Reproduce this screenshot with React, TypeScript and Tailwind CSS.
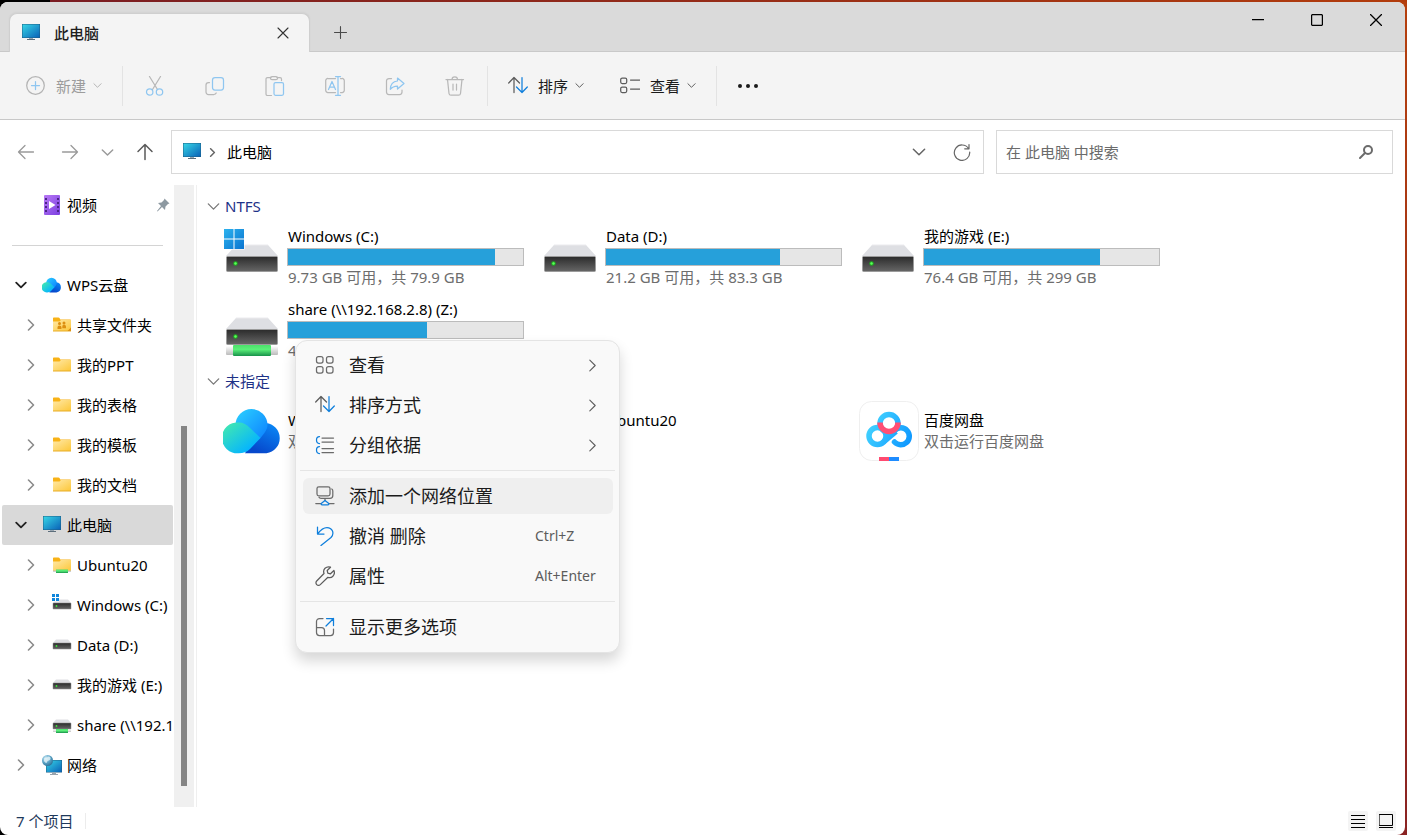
import { useState, type ReactNode } from "react";
import clsx from "clsx";

/* ---------- line icons ---------- */

type LineProps = { size?: number; box?: number; width?: number; className?: string; children: ReactNode };

function Line({ size = 20, box = 20, width = 1.25, className, children }: LineProps) {
  return (
    <svg
      width={size}
      height={size}
      viewBox={`0 0 ${box} ${box}`}
      fill="none"
      stroke="currentColor"
      strokeWidth={width}
      strokeLinecap="round"
      strokeLinejoin="round"
      className={clsx("shrink-0", className)}
      aria-hidden="true"
    >
      {children}
    </svg>
  );
}

const SOFT_BLUE = "#8fc6f0";
const BLUE = "#0f7fdc";

function ChevronDown({ size = 9, width = 1.1, className }: { size?: number; width?: number; className?: string }) {
  return (
    <Line size={size} box={10} width={width} className={className}>
      <path d="M1 3l4 4 4-4" />
    </Line>
  );
}

function ChevronRight({ size = 12, width = 1, className }: { size?: number; width?: number; className?: string }) {
  return (
    <Line size={size} box={12} width={width} className={className}>
      <path d="M3.500 1l5 5-5 5" />
    </Line>
  );
}

const NewIcon = () => (
  <Line>
    <circle cx="9.500" cy="9.500" r="8.800" />
    <path d="M9.500 5.500v8M5.500 9.500h8" stroke={SOFT_BLUE} />
  </Line>
);

const CutIcon = () => (
  <Line>
    <path d="M4.500.5l8 13M15.500.5l-8 13" />
    <circle cx="4.700" cy="16" r="3.200" stroke={SOFT_BLUE} />
    <circle cx="14.500" cy="16" r="3.200" stroke={SOFT_BLUE} />
  </Line>
);

const CopyIcon = () => (
  <Line>
    <path d="M4.500 6.500H3.500a2.500 2.500 0 0 0-2.500 2.500v7a2.500 2.500 0 0 0 2.500 2.500h5.500a2.500 2.500 0 0 0 2.200-1.500" />
    <rect x="7.500" y="1.500" width="11" height="12.500" rx="2.500" stroke={SOFT_BLUE} />
  </Line>
);

const PasteIcon = () => (
  <Line>
    <path d="M6 1.500H2.500a1.500 1.500 0 0 0-1.500 1.500v15a1.500 1.500 0 0 0 1.500 1.500h4M12 1.500h3A1.500 1.500 0 0 1 16.500 3v1.500" />
    <rect x="5.500" y=".7" width="7" height="3" rx="1.500" />
    <rect x="9" y="6.500" width="9.500" height="12.800" rx="1.500" stroke={SOFT_BLUE} />
  </Line>
);

const RenameIcon = () => (
  <Line>
    <path d="M10.500 2.500H3A2.300 2.300 0 0 0 .7 5v9A2.300 2.300 0 0 0 3 16.500h7.500M15.500 2.500H17A2.300 2.300 0 0 1 19.300 5v9a2.300 2.300 0 0 1-2.300 2.500h-1.500" />
    <g stroke={SOFT_BLUE}>
      <path d="M13 .7v18.600M10.500.7h5M10.500 19.300h5M3.500 13.500l3.500-8 3.500 8M4.600 11h4.800" />
    </g>
  </Line>
);

const ShareIcon = () => (
  <Line>
    <path d="M6.500 2.500H4A2.500 2.500 0 0 0 1.500 5v11A2.500 2.500 0 0 0 4 18.500h10.500A2.500 2.500 0 0 0 17 16v-2" />
    <path d="M12.500 2l6.500 5.500-6.500 5.500V10C9 10 7 11 5.300 13.300 5.500 8.500 8 5.300 12.500 5z" stroke={SOFT_BLUE} />
  </Line>
);

const TrashIcon = () => (
  <Line>
    <path d="M1 3.500h17.500M7 3.500a2.700 2.700 0 0 1 5.500 0M2.500 3.500l1.500 14a2 2 0 0 0 2 1.700h7.500a2 2 0 0 0 2-1.700L17 3.500M8 8v6M11.500 8v6" />
  </Line>
);

const SortIcon = () => (
  <Line>
    <path d="M6 16.500v-15M.7 7L6 1.500 11.500 7" />
    <path d="M14 1.500v15M8.500 11l5.500 5.500 5.300-5.500" stroke={BLUE} />
  </Line>
);

const ViewIcon = () => (
  <Line>
    <rect x=".7" y="2" width="6" height="5.500" rx="1.500" />
    <rect x=".7" y="11" width="6" height="5.500" rx="1.500" />
    <path d="M10.500 4h9M10.500 13h9" />
  </Line>
);

const GridIcon = () => (
  <Line className="text-[#6b6b6b]">
    <rect x="1.500" y="1.500" width="6.500" height="6.500" rx="2" />
    <rect x="11.500" y="1.500" width="6.500" height="6.500" rx="2" />
    <rect x="1.500" y="11.500" width="6.500" height="6.500" rx="2" />
    <rect x="11.500" y="11.500" width="6.500" height="6.500" rx="2" />
  </Line>
);

const GroupIcon = () => (
  <Line className="text-[#6b6b6b]">
    <path d="M7 3h11.500M7 7h11.500M7 13.500h11.500M7 17.500h11.500" />
    <path d="M4.500 1.500C2 1.500 1.500 2.500 1.500 5s.5 3.500 3 3.500M4.500 11.500c-2.500 0-3 1-3 3.500s.5 3.500 3 3.500" stroke={BLUE} />
  </Line>
);

const NetworkPlaceIcon = () => (
  <Line className="text-[#6b6b6b]">
    <rect x="2" y=".8" width="13" height="9" rx="1.800" />
    <path d="M16.800 3c.8.4 1 1 1 2v4.500c0 1.800-1 2.800-2.800 2.800H6c-1 0-1.700-.3-2-1M10 12.500v2M.8 17.500h5M14 17.500h5" />
    <path d="M10 14.500l3.500 2.700c.6.600.4 1.600-.7 1.600H7.200c-1.100 0-1.300-1-.7-1.600z" stroke={BLUE} />
  </Line>
);

const UndoIcon = () => (
  <Line className="text-[#0f7fdc]">
    <path d="M2.500 1v7h6.500M2.800 7.700C5.500 4 8 1.500 12 1.500c5 0 8 5.500 4 10L6 19.500" />
  </Line>
);

const WrenchIcon = () => (
  <Line className="text-[#5c5c5c]">
    <path d="M15.500 1.200l-3.300 3.300.6 2.700 2.700.6L18.900 4.500c1 2.500.3 4.500-1 5.700-1.300 1.300-3.200 1.600-5 1.100L5.300 18.600a2.500 2.500 0 0 1-3.600-3.600L9 7.500C8.300 5.500 8.700 3.600 10 2.300c1.400-1.300 3.400-1.900 5.500-1.100z" />
  </Line>
);

const MoreOptionsIcon = () => (
  <Line className="text-[#6b6b6b]">
    <path d="M8 1.500H4.500a3 3 0 0 0-3 3v11a3 3 0 0 0 3 3h11a3 3 0 0 0 3-3V12M1.500 10.500h5a3 3 0 0 1 3 3v5" />
    <path d="M11.500 1.500h7v7M18.500 1.500l-7.500 7.500" stroke={BLUE} />
  </Line>
);

/* ---------- colour icons ---------- */

function Gradients() {
  return (
    <svg width="0" height="0" className="absolute" aria-hidden="true">
      <defs>
        <linearGradient id="screen" x1="0" y1="0" x2="1" y2="1">
          <stop offset="0" stopColor="#37d6e6" />
          <stop offset="1" stopColor="#0a62b8" />
        </linearGradient>
        <linearGradient id="folder" x1="0" y1="0" x2="1" y2="1">
          <stop offset="0" stopColor="#ffe9a8" />
          <stop offset="1" stopColor="#fcc739" />
        </linearGradient>
        <linearGradient id="body" x1="0" y1="0" x2="0" y2="1">
          <stop offset="0" stopColor="#2b2b2b" />
          <stop offset="1" stopColor="#666" />
        </linearGradient>
        <linearGradient id="pipe" x1="0" y1="0" x2="0" y2="1">
          <stop offset="0" stopColor="#4be06a" />
          <stop offset=".4" stopColor="#5cf07a" />
          <stop offset="1" stopColor="#18924a" />
        </linearGradient>
        <linearGradient id="cap" x1="0" y1="0" x2="0" y2="1">
          <stop offset="0" stopColor="#fff" />
          <stop offset="1" stopColor="#bbb" />
        </linearGradient>
        <linearGradient id="win" x1="0" y1="0" x2="1" y2="1">
          <stop offset="0" stopColor="#2cb2ee" />
          <stop offset="1" stopColor="#0a74d0" />
        </linearGradient>
        <linearGradient id="cloudTop" x1="0" y1="0" x2="1" y2="1">
          <stop offset="0" stopColor="#2cd2ff" />
          <stop offset="1" stopColor="#0a7cff" />
        </linearGradient>
        <linearGradient id="cloudLeft" x1="0" y1="0" x2="1" y2="1">
          <stop offset=".1" stopColor="#3fe6b4" />
          <stop offset=".8" stopColor="#04b4ff" />
        </linearGradient>
        <linearGradient id="cloudRight" gradientUnits="userSpaceOnUse" x1="52" y1="24" x2="38" y2="52">
          <stop offset="0" stopColor="#0a86f5" />
          <stop offset="1" stopColor="#0648cc" />
        </linearGradient>
        <linearGradient id="film" x1="0" y1="0" x2="1" y2="1">
          <stop offset="0" stopColor="#b878f5" />
          <stop offset="1" stopColor="#7b3fe0" />
        </linearGradient>
        <linearGradient id="pan" gradientUnits="userSpaceOnUse" x1="8" y1="20" x2="52" y2="44">
          <stop offset="0" stopColor="#45d6ff" />
          <stop offset="1" stopColor="#0c95ff" />
        </linearGradient>
        <radialGradient id="globe" cx=".35" cy=".3" r=".8">
          <stop offset="0" stopColor="#cdeaf5" />
          <stop offset=".5" stopColor="#5fa6c8" />
          <stop offset="1" stopColor="#24688f" />
        </radialGradient>
      </defs>
    </svg>
  );
}

function MonitorIcon() {
  return (
    <svg width="20" height="20" viewBox="0 0 20 20" className="shrink-0" aria-hidden="true">
      <rect x="1" y="1" width="18" height="14" fill="#1d5f86" />
      <rect x="1.500" y="1.500" width="17" height="13" fill="url(#screen)" />
      <path d="M8 15h4v1.500H8z" fill="#9aa7b2" />
      <path d="M6 16h8v1H6z" fill="#5d6e7c" />
    </svg>
  );
}

function FolderIcon({ variant, size = 20 }: { variant?: "shared" | "network"; size?: number }) {
  return (
    <svg width={size} height={size} viewBox="0 0 20 20" className="shrink-0" aria-hidden="true">
      <path d="M1 3.500c0-.6.400-1 1-1h4.500c.5 0 .8.200 1 .5L8.300 4.500H18c.6 0 1 .4 1 1V8H1z" fill="#f8b216" />
      <path d="M1 6.500h6.500L9 5h10v11H1z" fill="url(#folder)" />
      <path d="M1 15.500h18v1H1z" fill="#e9ac25" />
      {variant === "shared" && (
        <g fill="#dc8f12">
          <circle cx="7.500" cy="8.500" r="1.500" />
          <circle cx="12" cy="8" r="1.500" />
          <path d="M5.500 14v-1.500c0-1.300.9-2 2-2s2 .7 2 2V14zM10.300 13.200v-1.500c0-1.300.7-1.900 1.700-1.900s2 .6 2 1.900v1.500zM19 12.500v3.500h-3.500z" />
        </g>
      )}
      {variant === "network" && (
        <>
          <path d="M1 15.500h18v1.500H1z" fill="#cfcfcf" />
          <path d="M4 14.500h12v3.500H4z" fill="url(#pipe)" />
        </>
      )}
    </svg>
  );
}

function SmallDriveIcon({ variant }: { variant?: "windows" | "network" }) {
  return (
    <svg width="20" height="20" viewBox="0 0 20 20" className="shrink-0 overflow-visible" aria-hidden="true">
      <path d="M4 4.500h12l3 3.500H1z" fill="#dfe0e4" />
      <rect x="1" y="8" width="18" height="6" rx=".5" fill="url(#body)" stroke="#8a8a8a" strokeWidth=".5" />
      <circle cx="4.500" cy="11" r=".9" fill="#3bea3b" />
      {variant === "windows" && (
        <g fill="#0f86dc">
          <path d="M-.5-1h7.500v7.500H-.5z" fill="#fff" />
          <path d="M0-1h3v3H0zM4-1h3v3H4zM0 3h3v3H0zM4 3h3v3H4z" />
        </g>
      )}
      {variant === "network" && (
        <>
          <path d="M1 15.500h18V17H1z" fill="#cfcfcf" />
          <path d="M4 14h12v4H4z" fill="url(#pipe)" />
        </>
      )}
    </svg>
  );
}

function VideoIcon() {
  return (
    <svg width="20" height="20" viewBox="0 0 20 20" className="shrink-0" aria-hidden="true">
      <rect x="2" y="0" width="16" height="20" rx="1" fill="url(#film)" />
      <path d="M3 3h2v2H3zM3 7h2v2H3zM3 11h2v2H3zM3 15h2v2H3zM15 3h2v2h-2zM15 7h2v2h-2zM15 11h2v2h-2zM15 15h2v2h-2z" fill="#4b2487" />
      <path d="M7 6l6.500 4L7 14z" fill="#fff" />
    </svg>
  );
}

function NetworkIcon() {
  return (
    <svg width="20" height="20" viewBox="0 0 20 20" className="shrink-0 overflow-visible" aria-hidden="true">
      <rect x="4" y="5" width="16" height="12.500" fill="#1d5f86" />
      <rect x="4.500" y="5.500" width="15" height="11.500" fill="url(#screen)" />
      <path d="M10 17.500h4v1.500h-4zM8 19h8v1H8z" fill="#98a4ae" />
      <circle cx="5.500" cy="5.500" r="5.500" fill="url(#globe)" />
      <path d="M2 3.500C4 1.500 5 3 6 2s3 0 2.500 2-3 1-3.500 3-2 .5-3-1z" fill="#e3f3f8" opacity=".8" />
    </svg>
  );
}

function CloudIcon({ size }: { size: number }) {
  return (
    <svg width={size} height={size} viewBox="0 0 60 60" className="shrink-0" aria-hidden="true">
      <path d="M22 52.200L38 24l5-2a15.200 15.200 0 0 1 .5 30.200z" fill="url(#cloudRight)" />
      <path d="M12.500 24a16 16 0 0 1 32 0c0 4.500-3 8-7 13L14 42z" fill="url(#cloudTop)" />
      <path d="M15.500 21.500c5 0 8 2 11 5L37.500 37 27 48c-3 3-6.500 4.200-11.500 4.200a15.400 15.400 0 1 1 0-30.700z" fill="url(#cloudLeft)" />
    </svg>
  );
}

function BaiduIcon() {
  return (
    <svg width="60" height="60" viewBox="0 0 60 60" className="shrink-0" aria-hidden="true">
      <rect x=".5" y=".5" width="59" height="59" rx="12" fill="#fff" stroke="#efefef" />
      <g fill="none" strokeWidth="5.500">
        <circle cx="30" cy="22.500" r="9" stroke="url(#pan)" />
        <circle cx="18.500" cy="35" r="8.500" stroke="url(#pan)" />
        <path d="M24 41.500L37 30.500" stroke="url(#pan)" />
        <path d="M36 29a8.500 8.500 0 1 1-.5 12" stroke="url(#pan)" strokeLinecap="round" />
        <path d="M21 21.500a9 9 0 0 0 18 0" stroke="#ff4f74" />
      </g>
      <path d="M20 56h10v4H20z" fill="#ff4a70" />
      <path d="M30 56h10v4H30z" fill="#1e8cff" />
    </svg>
  );
}

function DriveIcon({ variant }: { variant?: "windows" | "network" }) {
  return (
    <svg width="58" height="58" viewBox="0 0 58 58" className="shrink-0" aria-hidden="true">
      <path d="M13 19h32l10 11H3z" fill="#dedfe3" />
      <path d="M13 19h32" stroke="#ebebee" />
      <rect x="3.500" y="30.500" width="51" height="15" rx="1" fill="url(#body)" stroke="#9b9b9b" />
      <circle cx="12.500" cy="37.500" r="2.200" fill="#1fae1f" />
      <circle cx="12.500" cy="37.500" r="1.200" fill="#5dff5d" />
      {variant === "windows" && (
        <>
          <path d="M0 3h21.500v20.500H0z" fill="#fff" />
          <path d="M1 3h9.500v9.500H1zM11.500 3H21v9.500h-9.500zM1 13.500h9.500V23H1zM11.500 13.500H21V23h-9.500z" fill="url(#win)" />
        </>
      )}
      {variant === "network" && (
        <>
          <rect x="3" y="47" width="52" height="9" rx="1" fill="url(#cap)" />
          <rect x="10" y="46" width="38" height="11" rx="1" fill="url(#pipe)" />
        </>
      )}
    </svg>
  );
}

/* ---------- data ---------- */

type TreeNode = { label: string; icon: ReactNode; level: 0 | 1; open?: boolean; selected?: boolean };

const tree: TreeNode[] = [
  { label: "WPS云盘", icon: <CloudIcon size={20} />, level: 0, open: true },
  { label: "共享文件夹", icon: <FolderIcon variant="shared" />, level: 1 },
  { label: "我的PPT", icon: <FolderIcon />, level: 1 },
  { label: "我的表格", icon: <FolderIcon />, level: 1 },
  { label: "我的模板", icon: <FolderIcon />, level: 1 },
  { label: "我的文档", icon: <FolderIcon />, level: 1 },
  { label: "此电脑", icon: <MonitorIcon />, level: 0, open: true, selected: true },
  { label: "Ubuntu20", icon: <FolderIcon variant="network" />, level: 1 },
  { label: "Windows (C:)", icon: <SmallDriveIcon variant="windows" />, level: 1 },
  { label: "Data (D:)", icon: <SmallDriveIcon />, level: 1 },
  { label: "我的游戏 (E:)", icon: <SmallDriveIcon />, level: 1 },
  { label: "share (\\\\192.168.2.8) (Z:)", icon: <SmallDriveIcon variant="network" />, level: 1 },
  { label: "网络", icon: <NetworkIcon />, level: 0 },
];

type Drive = { name: string; info: string; used: number; variant?: "windows" | "network" };

const drives: Drive[] = [
  { name: "Windows (C:)", info: "9.73 GB 可用，共 79.9 GB", used: 88, variant: "windows" },
  { name: "Data (D:)", info: "21.2 GB 可用，共 83.3 GB", used: 74 },
  { name: "我的游戏 (E:)", info: "76.4 GB 可用，共 299 GB", used: 75 },
  { name: "share (\\\\192.168.2.8) (Z:)", info: "4.05 TB 可用，共 9.9 TB", used: 59, variant: "network" },
];

const places = [
  { name: "WPS云盘", info: "双击进入WPS云盘", icon: <CloudIcon size={60} /> },
  { name: "Ubuntu20", info: "", icon: <FolderIcon variant="network" size={56} /> },
  { name: "百度网盘", info: "双击运行百度网盘", icon: <BaiduIcon /> },
];

type MenuEntry = { label: string; icon: ReactNode; submenu?: boolean; shortcut?: string };

const menuGroups: MenuEntry[][] = [
  [
    { label: "查看", icon: <GridIcon />, submenu: true },
    { label: "排序方式", icon: <SortIcon />, submenu: true },
    { label: "分组依据", icon: <GroupIcon />, submenu: true },
  ],
  [
    { label: "添加一个网络位置", icon: <NetworkPlaceIcon /> },
    { label: "撤消 删除", icon: <UndoIcon />, shortcut: "Ctrl+Z" },
    { label: "属性", icon: <WrenchIcon />, shortcut: "Alt+Enter" },
  ],
  [{ label: "显示更多选项", icon: <MoreOptionsIcon /> }],
];

/* ---------- window parts ---------- */

function TitleBar() {
  return (
    <header className="flex h-[50px] items-end border-b border-[#c9c9c9] bg-[#dadada] pl-[9px]">
      <div className="-mb-px flex h-[39px] w-[301px] items-center rounded-t-lg border border-b-0 border-[#cfcfcf] bg-[#f4f4f4] pr-3.5 pl-[11px] shadow-[0_-1px_2px_rgba(0,0,0,0.04)]">
        <MonitorIcon />
        <span className="ml-[13px] flex-1 font-medium text-[#1f1f1f]">此电脑</span>
        <button type="button" aria-label="关闭标签页" className="flex size-6 items-center justify-center text-[#333]">
          <Line size={12} box={12} width={1.1}>
            <path d="M1 1l10 10M11 1L1 11" />
          </Line>
        </button>
      </div>
      <button type="button" aria-label="新建标签页" className="ml-3.5 flex h-[38px] w-8 items-center justify-center text-[#4a4a4a]">
        <Line size={14} box={14} width={1.1}>
          <path d="M7.500 1.500v12M1.500 7.500h12" />
        </Line>
      </button>
      <div className="ml-auto flex self-start text-black">
        <button type="button" aria-label="最小化" className="flex h-9 w-[59px] items-center justify-center">
          <Line size={12} box={12}>
            <path d="M0 5.500h12" />
          </Line>
        </button>
        <button type="button" aria-label="最大化" className="flex h-9 w-[59px] items-center justify-center">
          <Line size={12} box={12}>
            <rect x=".6" y=".6" width="10.800" height="10.800" rx="1" />
          </Line>
        </button>
        <button type="button" aria-label="关闭" className="flex h-9 w-[59px] items-center justify-center">
          <Line size={12} box={12}>
            <path d="M.5.5l11 11M11.500.5l-11 11" />
          </Line>
        </button>
      </div>
    </header>
  );
}

function ToolButton({ label, icon, disabled }: { label: string; icon: ReactNode; disabled?: boolean }) {
  return (
    <button
      type="button"
      disabled={disabled}
      className={clsx("flex h-10 items-center px-[18px]", disabled ? "text-[#b4b4b4]" : "text-[#5c5c5c]")}
    >
      {icon}
      <span className={clsx("ml-2.5", disabled ? "text-[#9c9c9c]" : "text-[#1b1b1b]")}>{label}</span>
      <ChevronDown className="ml-[7px]" />
    </button>
  );
}

function ToolIcon({ label, children }: { label: string; children: ReactNode }) {
  return (
    <button type="button" disabled aria-label={label} className="flex h-10 w-[60px] items-center justify-center text-[#b8b8b8]">
      {children}
    </button>
  );
}

const Divider = () => <span className="mx-0.5 h-10 w-px bg-[#e3e3e3]" />;

function Toolbar() {
  return (
    <div className="flex h-[68px] items-center border-b border-[#c8c8c8] bg-[#f4f4f4] pl-2">
      <ToolButton label="新建" icon={<NewIcon />} disabled />
      <Divider />
      <ToolIcon label="剪切"><CutIcon /></ToolIcon>
      <ToolIcon label="复制"><CopyIcon /></ToolIcon>
      <ToolIcon label="粘贴"><PasteIcon /></ToolIcon>
      <ToolIcon label="重命名"><RenameIcon /></ToolIcon>
      <ToolIcon label="共享"><ShareIcon /></ToolIcon>
      <ToolIcon label="删除"><TrashIcon /></ToolIcon>
      <Divider />
      <ToolButton label="排序" icon={<SortIcon />} />
      <ToolButton label="查看" icon={<ViewIcon />} />
      <Divider />
      <button type="button" aria-label="更多" className="flex h-10 w-[58px] items-center justify-center text-[#1b1b1b]">
        <svg width="20" height="20" viewBox="0 0 20 20" fill="currentColor" aria-hidden="true">
          <circle cx="2" cy="10" r="2" />
          <circle cx="10" cy="10" r="2" />
          <circle cx="18" cy="10" r="2" />
        </svg>
      </button>
    </div>
  );
}

function AddressRow() {
  return (
    <div className="flex items-center gap-3 pt-2.5 pr-3 pb-[11px] pl-2">
      <nav className="flex min-w-0 flex-1 items-center gap-2 text-[#9a9a9a]">
        <button type="button" aria-label="后退" className="flex size-9 items-center justify-center">
          <Line size={18} box={18} width={1.3}>
            <path d="M16.500 9h-15M8 2.500L1.500 9 8 15.500" />
          </Line>
        </button>
        <button type="button" aria-label="前进" className="flex size-9 items-center justify-center">
          <Line size={18} box={18} width={1.3}>
            <path d="M1.500 9h15M10 2.500L16.500 9 10 15.500" />
          </Line>
        </button>
        <button type="button" aria-label="最近浏览的位置" className="flex h-9 w-[23px] items-center justify-center">
          <ChevronDown size={13} width={1.1} />
        </button>
        <button type="button" aria-label="向上" className="flex size-9 items-center justify-center text-[#5a5a5a]">
          <Line size={18} box={18} width={1.5}>
            <path d="M9 16.500v-15M2 8.500L9 1.500l7 7" />
          </Line>
        </button>
        <div className="flex h-11 min-w-0 flex-1 items-center border border-[#d9d9d9] bg-white pl-2.5 text-[#666]">
          <MonitorIcon />
          <ChevronRight size={9} width={2} className="mx-1.5" />
          <a href="#" className="ml-1 flex-1 text-black">此电脑</a>
          <button type="button" aria-label="以前的位置" className="flex h-10 w-[43px] items-center justify-center">
            <ChevronDown size={14} width={1.1} />
          </button>
          <button type="button" aria-label="刷新" className="flex h-10 w-[43px] items-center justify-center">
            <Line size={18} box={18} width={1.2}>
              <path d="M15.500 5.500A7.700 7.700 0 1 0 16.700 9M16 1.500v4.300h-4.300" />
            </Line>
          </button>
        </div>
      </nav>
      <label className="flex h-11 w-[397px] items-center border border-[#d9d9d9] bg-white pr-[18px] pl-[9px] text-[#6b6b6b]">
        <input
          type="search"
          aria-label="在 此电脑 中搜索"
          placeholder="在 此电脑 中搜索"
          className="min-w-0 flex-1 outline-none placeholder:text-[#6b6b6b]"
        />
        <Line size={16} box={16} width={2}>
          <circle cx="10" cy="6" r="4" />
          <path d="M7 9l-5 5" />
        </Line>
      </label>
    </div>
  );
}

function Sidebar() {
  return (
    <aside className="flex w-[194px] shrink-0">
      <div className="min-w-0 flex-1">
        <a href="#" className="flex h-10 items-center pr-1 pl-[42px] text-black">
          <VideoIcon />
          <span className="ml-[5px] flex-1">视频</span>
          <svg width="14" height="14" viewBox="0 0 14 14" fill="#8d99a1" aria-hidden="true">
            <path d="M8.500.5l5 5-1.500.5-2.500 2.500-.5 3.500-3-3-4.500 4.500L1 13l4-5-3-3 3.500-.5L8 2z" />
          </svg>
        </a>
        <div className="flex h-10 items-center pr-[11px] pl-3">
          <hr className="w-full border-[#d4d4d4]" />
        </div>
        <ul>
          {tree.map((node) => (
            <li key={node.label} className="pl-0.5">
              <a
                href="#"
                className={clsx(
                  "flex h-10 items-center overflow-hidden whitespace-nowrap text-black",
                  node.level === 0 ? "pl-2" : "pl-[18px]",
                  node.selected && "mr-px rounded-xs bg-[#d9d9d9]",
                )}
              >
                <span className="flex w-[22px] shrink-0 justify-center">
                  {node.open ? (
                    <ChevronDown size={12} width={1.5} className="text-[#222]" />
                  ) : (
                    <ChevronRight width={1.6} className="text-[#8a8a8a]" />
                  )}
                </span>
                <span className="ml-2.5 shrink-0">{node.icon}</span>
                <span className="ml-[5px]">{node.label}</span>
              </a>
            </li>
          ))}
        </ul>
      </div>
      <div className="flex w-5 flex-col items-center justify-end bg-[#f0f0f0] pb-[21px]">
        <div className="h-[360px] w-1.5 bg-[#858585]" />
      </div>
    </aside>
  );
}

function GroupHeader({ children }: { children: ReactNode }) {
  return (
    <h2 className="-ml-4 mb-[11px] flex h-[18px] items-center gap-[5px] text-[#1e3287]">
      <ChevronDown size={13} width={1} className="text-[#777]" />
      {children}
    </h2>
  );
}

function Content() {
  return (
    <section className="min-w-0 flex-1 pt-3 pl-[26px]">
      <GroupHeader>NTFS</GroupHeader>
      <ul className="grid grid-cols-[repeat(auto-fill,318px)]">
        {drives.map((d) => (
          <li key={d.name} className="flex h-[73px]">
            <div className="w-16 shrink-0">
              <DriveIcon variant={d.variant} />
            </div>
            <div className="w-[237px]">
              <p className="pl-px">{d.name}</p>
              <div
                role="progressbar"
                aria-label={d.name}
                aria-valuenow={d.used}
                className="mt-0.5 h-[18px] border border-[#bcbcbc] bg-[#e6e6e6]"
              >
                <div className="h-full bg-[#26a0da]" style={{ width: `${d.used}%` }} />
              </div>
              <p className="mt-px pl-px text-[#6d6d6d]">{d.info}</p>
            </div>
          </li>
        ))}
      </ul>
      <GroupHeader>未指定</GroupHeader>
      <ul className="grid grid-cols-[repeat(auto-fill,318px)]">
        {places.map((p) => (
          <li key={p.name} className="flex h-[60px]">
            <div className="w-16 shrink-0">{p.icon}</div>
            <div className="pt-[9px] pl-px">
              <p>{p.name}</p>
              <p className="mt-px text-[#6d6d6d]">{p.info}</p>
            </div>
          </li>
        ))}
      </ul>
    </section>
  );
}

function ContextMenu() {
  const [active, setActive] = useState("添加一个网络位置");

  return (
    <div
      role="menu"
      className="absolute top-[340px] left-[295px] w-[325px] rounded-xl border border-[#e4e4e4] bg-[#f9f9f9] pt-1.5 pb-[7px] shadow-[0_8px_14px_rgba(0,0,0,0.16)]"
    >
      {menuGroups.map((group, i) => (
        <div key={i}>
          {i > 0 && <hr className="mx-1 my-[7px] border-[#e5e5e5]" />}
          <div className="flex flex-col gap-1 pr-1.5 pl-[7px]">
            {group.map((entry) => (
              <button
                key={entry.label}
                type="button"
                role="menuitem"
                onMouseEnter={() => setActive(entry.label)}
                className={clsx(
                  "flex h-9 items-center rounded-md pl-3 text-left text-[#5c5c5c]",
                  entry.label === active && "bg-[#efefef]",
                )}
              >
                {entry.icon}
                <span className="ml-3.5 flex-1 text-lg text-[#1b1b1b]">{entry.label}</span>
                {entry.submenu && <ChevronRight size={13} className="mr-3.5" />}
                {entry.shortcut && <span className="w-[78px] text-sm">{entry.shortcut}</span>}
              </button>
            ))}
          </div>
        </div>
      ))}
    </div>
  );
}

function StatusBar() {
  return (
    <footer className="flex h-7 items-center pr-[9px] pl-4 text-[#1e395b]">
      <span>7 个项目</span>
      <span className="ml-3 h-4 w-px bg-[#ececec]" />
      <div className="ml-auto flex gap-2 text-black">
        <button type="button" aria-label="详细信息" className="flex size-5 items-center justify-center rounded-xs bg-[#f4f4f4]">
          <Line size={14} box={14} width={1}>
            <path d="M0 1.500h14M0 5.500h14M0 9.500h14M0 13.500h14" />
          </Line>
        </button>
        <button type="button" aria-label="大图标" className="flex size-5 items-center justify-center rounded-xs bg-[#f4f4f4]">
          <Line size={14} box={14} width={1}>
            <path d="M.5.5h13v11H.5zM0 13.500h14" />
          </Line>
        </button>
      </div>
    </footer>
  );
}

export default function App() {
  return (
    <main className="relative flex min-h-screen flex-col bg-[linear-gradient(90deg,#000_50px,transparent_50px),linear-gradient(#b5400e,#8a2323)] font-['Noto_Sans','Noto_Sans_CJK_SC',sans-serif] text-[15px] leading-5 text-black">
      <Gradients />
      <div className="h-0.5 bg-[linear-gradient(90deg,#000_50px,#7a1c22_50px,#b23c0c)]" />
      <div className="mr-0.5 flex flex-1 flex-col overflow-hidden rounded-lg bg-white">
        <TitleBar />
        <Toolbar />
        <AddressRow />
        <div className="flex flex-1">
          <Sidebar />
          <div className="ml-0.5 w-px bg-[#efefef]" />
          <Content />
        </div>
        <StatusBar />
      </div>
      <ContextMenu />
    </main>
  );
}
